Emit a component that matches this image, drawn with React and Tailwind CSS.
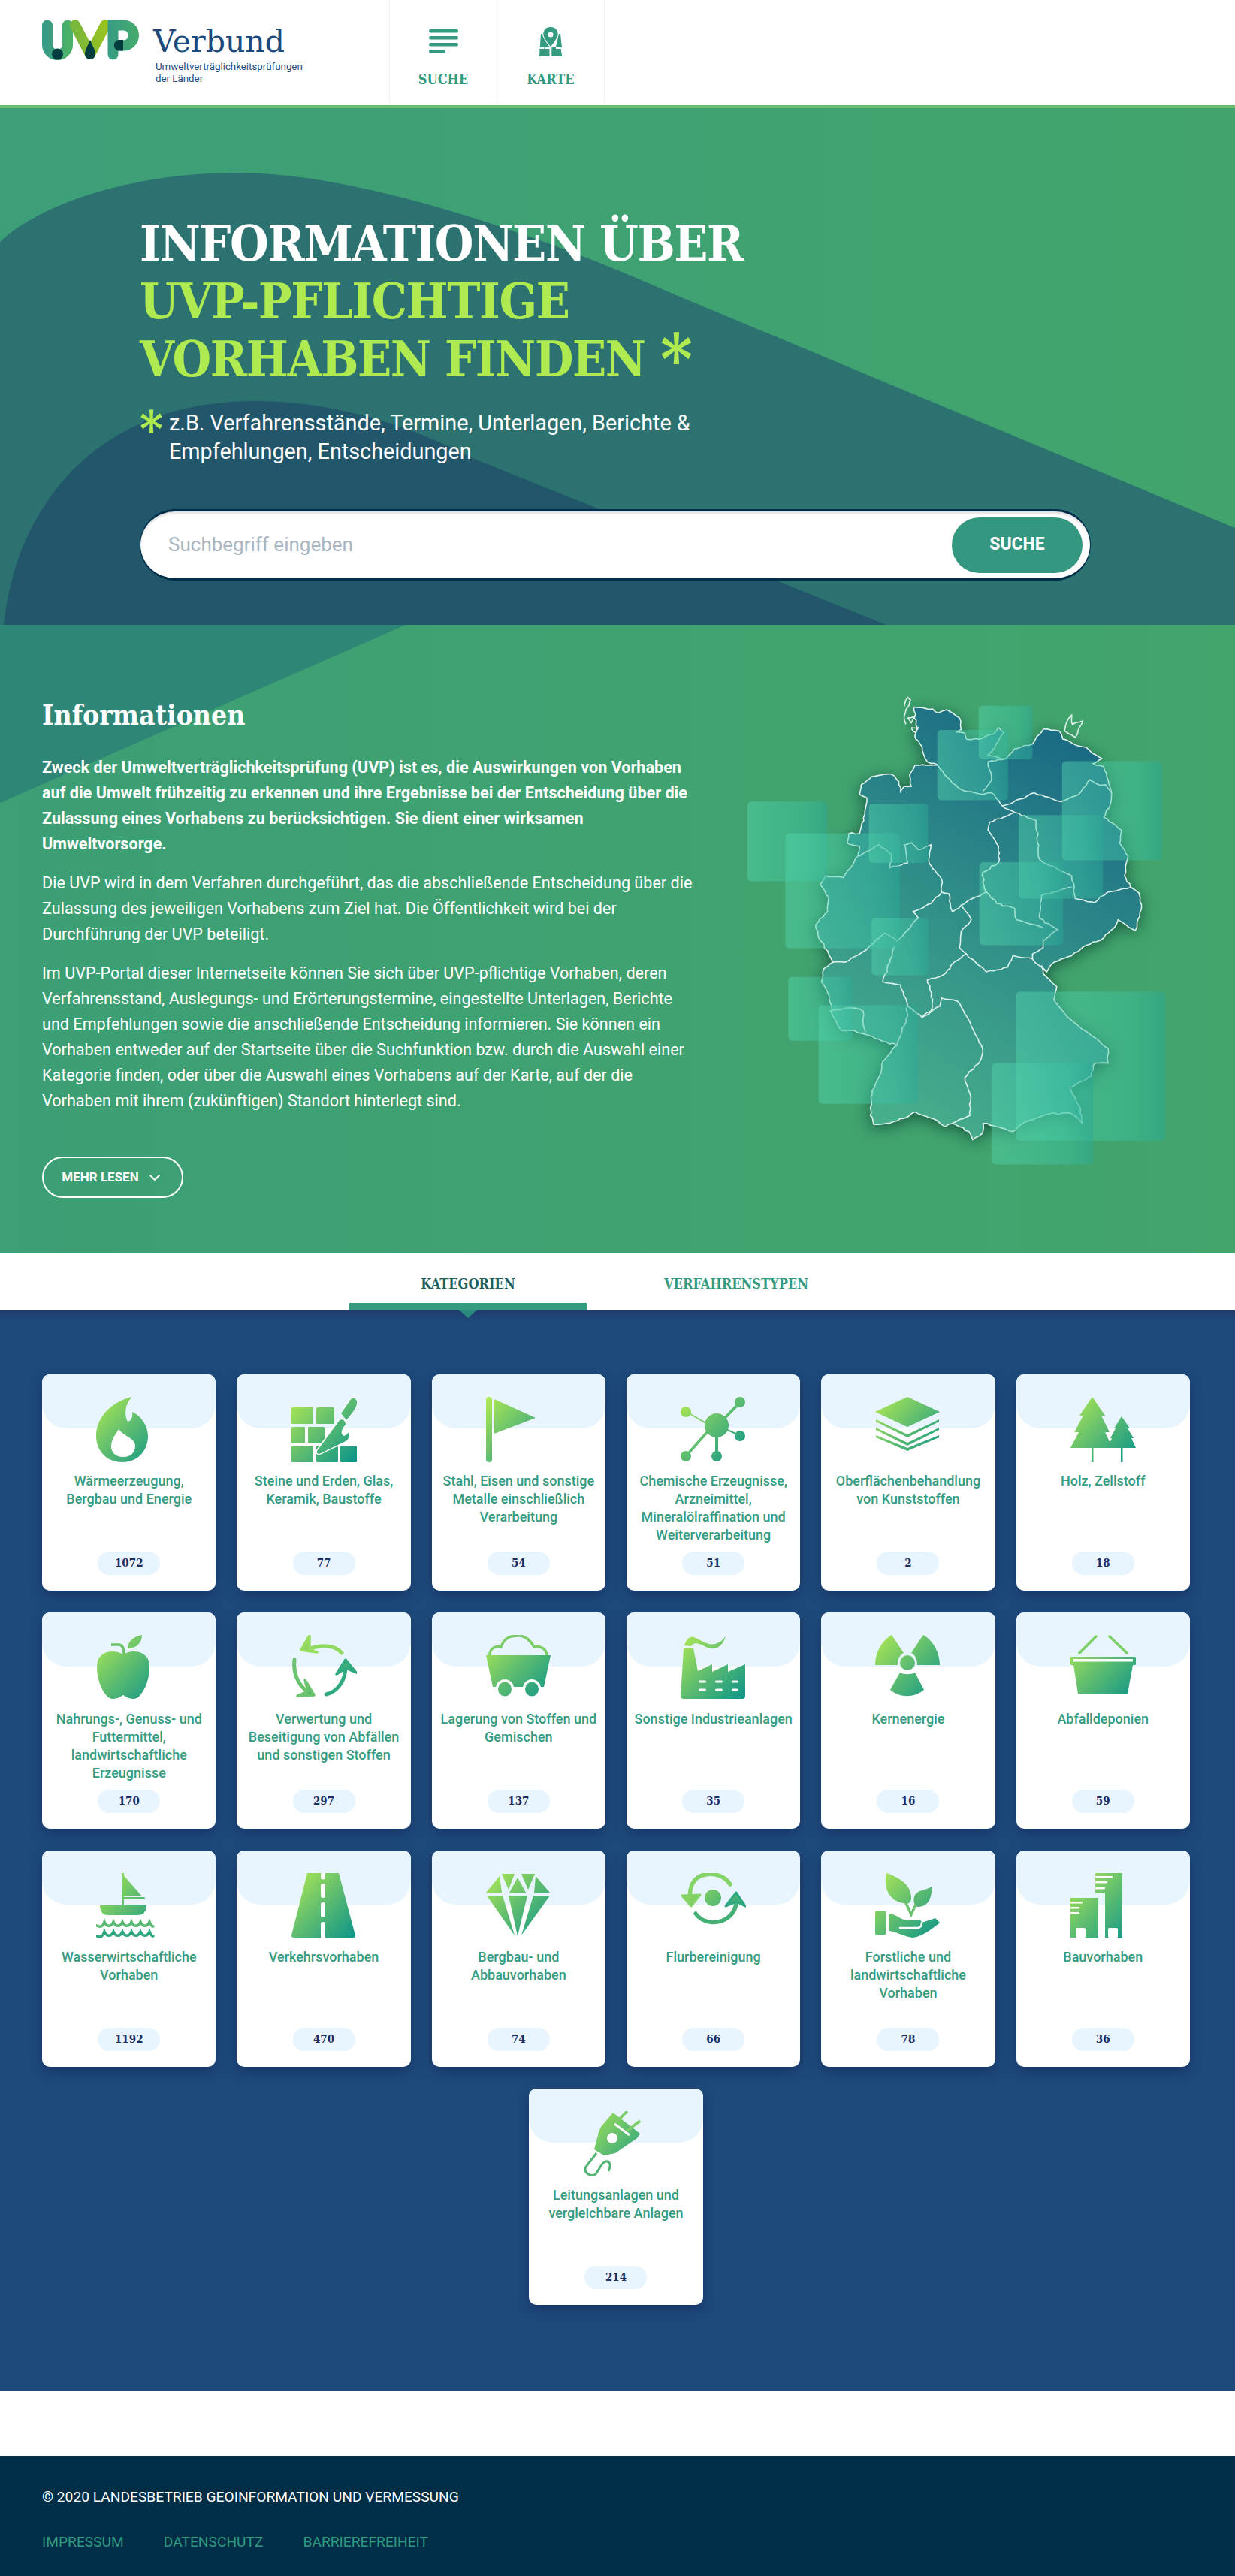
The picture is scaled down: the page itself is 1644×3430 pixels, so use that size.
import { useId } from 'react';
import { ChevronDown } from 'lucide-react';

// coastline and borders are traced in a 1568x1568 space, then roughened a bit
function rough(points, seed = 1, amount = 5) {
  let s = seed;
  const rnd = () => {
    s = (s * 9301 + 49297) % 233280;
    return s / 233280 - 0.5;
  };
  let d = `M${points[0][0]} ${points[0][1]}`;
  for (let i = 1; i < points.length; i++) {
    const [ax, ay] = points[i - 1];
    const [bx, by] = points[i];
    const steps = Math.max(1, Math.round(Math.hypot(bx - ax, by - ay) / 11));
    for (let k = 1; k <= steps; k++) {
      const t = k / steps;
      const j = k === steps ? 0 : amount;
      d += `L${(ax + (bx - ax) * t + rnd() * j).toFixed(1)} ${(ay + (by - ay) * t + rnd() * j).toFixed(1)}`;
    }
  }
  return d;
}

const OUTLINE = [[668,142],[720,148],[735,160],[760,150],[795,175],[800,210],[785,218],[810,222],[815,240],[850,240],[890,225],[905,205],[918,220],[905,245],[875,290],[925,300],[950,270],[1000,255],[1020,225],[1030,210],[1075,215],[1085,240],[1115,255],[1150,265],[1170,285],[1195,300],[1170,315],[1200,325],[1222,405],[1218,440],[1200,480],[1250,520],[1245,560],[1268,600],[1258,660],[1275,695],[1298,712],[1306,760],[1288,828],[1262,810],[1240,795],[1235,810],[1200,850],[1140,880],[1110,905],[1060,925],[1040,955],[1025,935],[1030,960],[1068,1000],[1060,1040],[1100,1095],[1165,1150],[1212,1190],[1212,1235],[1175,1235],[1165,1275],[1105,1310],[1135,1375],[1140,1420],[1110,1390],[1050,1390],[980,1415],[945,1445],[880,1425],[862,1420],[860,1450],[832,1470],[822,1445],[775,1420],[755,1430],[720,1405],[670,1385],[640,1405],[590,1420],[555,1423],[545,1395],[550,1320],[575,1265],[580,1230],[620,1180],[560,1160],[525,1145],[500,1135],[465,1135],[440,1090],[430,1030],[408,985],[415,945],[440,925],[425,890],[400,850],[392,810],[425,770],[428,725],[405,685],[420,660],[470,665],[490,635],[510,600],[515,570],[480,560],[485,530],[515,530],[530,470],[535,420],[515,410],[520,380],[550,355],[605,348],[625,370],[630,400],[640,385],[660,385],[655,350],[670,320],[735,320],[705,310],[685,255],[670,230],[675,215],[668,142]];

const BORDERS = [
  [[735,322],[775,375],[800,395],[860,410],[885,405],[915,445],[950,465]],
  [[925,300],[875,310],[885,365],[860,400]],
  [[915,445],[945,435],[1005,405],[1080,432],[1130,410],[1160,365],[1190,382],[1205,380],[1222,405]],
  [[950,465],[880,495],[875,520],[905,570],[905,620],[860,650],[865,700],[870,708]],
  [[950,465],[1010,490],[1020,610],[1110,660],[1120,730],[1175,742],[1210,710],[1275,695]],
  [[1110,695],[1025,720],[1020,790],[1070,825],[1030,860],[1030,880],[1000,900],[1000,915]],
  [[870,708],[900,745],[950,760],[955,795],[1030,820]],
  [[800,752],[828,795],[800,830],[795,880],[815,900]],
  [[870,708],[800,750],[775,770],[765,715],[745,710],[715,745],[665,770],[680,790]],
  [[515,600],[570,565],[605,595],[600,635],[650,620],[640,565],[660,558],[680,580],[715,565],[710,620],[745,670],[745,710]],
  [[680,790],[620,860],[585,835],[540,880],[475,925],[440,925]],
  [[615,875],[600,925],[580,985],[630,995],[650,1060],[690,1095],[715,1075],[720,1040],[705,980],[755,960],[780,925],[815,900]],
  [[815,900],[870,955],[930,940],[945,905],[1000,915],[1040,955]],
  [[690,1095],[740,1060],[745,1035],[790,1045],[825,1110],[860,1190],[855,1225],[810,1280],[825,1330],[825,1395],[775,1420]],
  [[620,1180],[650,1090],[645,1065]],
  [[430,1075],[495,1065],[525,1075],[525,1110],[530,1145]],
  [[640,140],[650,112],[658,120],[640,170],[645,195]],
  [[1095,190],[1110,167],[1112,195],[1140,185],[1120,235],[1090,215],[1095,190]],
  [[650,175],[670,170],[660,190],[650,175]],
  [[660,205],[680,205],[672,220],[660,205]],
];

const SQUARES = [
  [200,432,223,245],[307,530,321,352],[541,438,166,182],[733,212,198,216],[849,138,151,164],
  [1083,308,280,304],[961,473,236,257],[851,618,235,255],[549,790,160,175],[315,970,180,196],
  [400,1057,279,303],[953,1016,419,457],[885,1236,285,310],
];

function GermanyMap() {
  return (
    <svg viewBox="190 0 1378 1568" preserveAspectRatio="none" className="w-[654px] h-[680px] mt-[48px] shrink-0">
      <defs>
        <linearGradient id="landFill" gradientUnits="userSpaceOnUse" x1="1200" y1="300" x2="500" y2="1400">
          <stop offset="0" stopColor="#1b6a84" />
          <stop offset="0.42" stopColor="#2e8b88" />
          <stop offset="1" stopColor="#49b18c" />
        </linearGradient>
        <linearGradient id="squareFill" x1="0" y1="0" x2="1" y2="0">
          <stop offset="0" stopColor="#55d8ae" stopOpacity="0.45" />
          <stop offset="0.75" stopColor="#3cc3a5" stopOpacity="0.42" />
          <stop offset="1" stopColor="#2aa896" stopOpacity="0.5" />
        </linearGradient>
      </defs>
      <g className="drop-shadow-[0_10px_22px_rgba(0,50,40,0.6)]">
        <path d={rough(OUTLINE, 7) + 'Z'} fill="url(#landFill)" stroke="#dff3ee" strokeWidth="1.6" vectorEffect="non-scaling-stroke" />
      </g>
      {BORDERS.map((b, i) => (
        <path key={i} d={rough(b, i + 11)} fill="none" stroke="#dff3ee" strokeWidth="1.6" vectorEffect="non-scaling-stroke" />
      ))}
      {SQUARES.map(([x, y, w, h], i) => (
        <rect key={i} x={x} y={y} width={w} height={h} rx="12" ry="11" fill="url(#squareFill)" />
      ))}
    </svg>
  );
}

// every icon sits in an 87px box, shapes share one diagonal gradient
function Icon({ children }) {
  const id = useId();
  return (
    <svg viewBox="0 0 87 87" className="w-[87px] h-[87px] relative" fill={`url(#${id})`} stroke="none">
      <defs>
        <linearGradient id={id} gradientUnits="userSpaceOnUse" x1="0" y1="4" x2="84" y2="84">
          <stop offset="0" stopColor="#aee853" />
          <stop offset="0.5" stopColor="#5dbc70" />
          <stop offset="1" stopColor="#0e9688" />
        </linearGradient>
      </defs>
      {children}
    </svg>
  );
}

const Flame = () => (
  <Icon>
    <path fillRule="evenodd" d="M48 0C20 6 0 28 0 52C0 72 14 87 35 87C55 87 69 72 69 52C69 40 61 26 48 20C49 26 47 32 42 33C38 26 37 10 48 0ZM30 43C26 50 20 56 20 66C20 74 26 80 36 80C46 80 52 74 52 65C52 55 36 52 30 43Z" />
  </Icon>
);
const Bricks = () => (
  <Icon>
    <rect x="0" y="14" width="29" height="22" rx="1.5" />
    <rect x="33" y="14" width="24" height="22" rx="1.5" />
    <rect x="0" y="40" width="18" height="22" rx="1.5" />
    <rect x="22" y="40" width="22" height="22" rx="1.5" />
    <rect x="0" y="65" width="29" height="22" rx="1.5" />
    <rect x="33" y="65" width="29" height="22" rx="1.5" />
    <rect x="65" y="65" width="22" height="22" rx="1.5" />
    <path d="M64 31C68 29 72 32 72 37C67 42 64 50 70 52C73 51 75 49 76 47C77 53 76 57 72 59L37 76C35 76 33 75 34 72Z" stroke="#fff" strokeWidth="3" strokeLinejoin="round" paintOrder="stroke" />
    <path d="M66 22L79 3C83 0 88 3 87 9C86 16 79 24 73 31Z" stroke="#fff" strokeWidth="2" paintOrder="stroke" />
  </Icon>
);
const FlagIcon = () => (
  <Icon>
    <rect x="0" y="0" width="8" height="87" rx="4" />
    <path d="M11 3L66 28L11 49Z" strokeLinejoin="round" />
  </Icon>
);
const Molecule = () => (
  <Icon>
    <circle cx="48" cy="38" r="16" />
    <circle cx="7" cy="20" r="7" />
    <circle cx="79" cy="7" r="7" />
    <circle cx="79" cy="52" r="7" />
    <circle cx="7" cy="79" r="7" />
    <circle cx="48" cy="79" r="7" />
    <path d="M7 18.5L40 37.5L42 41L9 21.5Z" />
    <path d="M77.5 6L81 8L50 40L47 38Z" />
    <path d="M78 50L80 53L48 39L50 37Z" />
    <path d="M5.5 78L8.5 80L42 42L39 40Z" />
    <rect x="46" y="40" width="4" height="38" />
  </Icon>
);
const Layers = () => (
  <Icon>
    <path d="M0 20L43 0L86 20L43 40Z" strokeLinejoin="round" />
    <path d="M1 30L43 50L85 30L85 33L43 54L1 33Z" />
    <path d="M1 41L43 61L85 41L85 44L43 65L1 44Z" />
    <path d="M1 51L43 68L85 51L85 54L43 72L1 54Z" />
  </Icon>
);
const Trees = () => (
  <Icon>
    <path d="M29 0L46 25H41L52 47H46L56 68H0L11 47H5L17 25H12Z" />
    <rect x="28" y="68" width="2.5" height="19" />
    <path d="M68 26L79 42H76L84 55H81L87 68H49L55 55H53L60 42H58Z" />
    <rect x="67" y="68" width="2.5" height="19" />
  </Icon>
);
const Apple = () => (
  <Icon>
    <path d="M36 26C26 20 10 20 3 32C-2 44 3 70 15 82C22 88 30 84 36 80C42 84 50 88 57 82C69 70 74 44 69 32C62 20 46 20 36 26Z" />
    <path d="M42 18C42 8 50 2 61 0C61 10 54 18 42 18Z" />
    <path d="M20 13H30C35 13 37 18 37 26" fill="none" stroke="#6cc267" strokeWidth="3.5" />
  </Icon>
);
const Recycle = () => (
  <Icon>
    <path d="M67 24C58 14 44 13 28 17" fill="none" stroke="#8fd862" strokeWidth="5" strokeLinecap="round" />
    <path d="M24 1L13 20L34 23L24 19Z" stroke="#98dc60" strokeWidth="3.5" strokeLinejoin="round" />
    <path d="M46 79C60 76 72 62 72 42" fill="none" stroke="#2faa7f" strokeWidth="5" strokeLinecap="round" />
    <path d="M72 33L60 52L72 44L86 50Z" stroke="#2faa7f" strokeWidth="3.5" strokeLinejoin="round" />
    <path d="M4 33C2 50 8 66 22 76" fill="none" stroke="#6cc36e" strokeWidth="5" strokeLinecap="round" />
    <path d="M30 80L8 81L22 75L18 60Z" stroke="#6cc36e" strokeWidth="3.5" strokeLinejoin="round" />
  </Icon>
);
const Cart = () => (
  <Icon>
    <path d="M0 27H86L77 69H9Z" strokeLinejoin="round" />
    <path d="M5 27C5 18 12 14 20 16C24 4 32 1 43 1C52 1 60 8 64 16C72 14 80 18 81 27" fill="none" stroke="#7dce68" strokeWidth="3.5" />
    <circle cx="25" cy="71" r="12" fill="#fff" />
    <circle cx="61" cy="71" r="12" fill="#fff" />
    <ellipse cx="25" cy="72" rx="9" ry="9.5" />
    <ellipse cx="61" cy="72" rx="9" ry="9.5" />
  </Icon>
);
const Factory = () => (
  <Icon>
    <path d="M4 18H17L23 48L42 39V49L63 39V49L86 39V81Q86 85 82 85H4Q0 85 0 81Z" />
    <path d="M5 14C8 4 14 0 20 4C30 9 38 14 46 12C52 10 58 6 60 1C58 12 48 22 36 17C26 12 18 8 14 15Z" />
    <g fill="#fff">
      <rect x="24" y="60.5" width="10" height="3" rx="1.5" />
      <rect x="46" y="60.5" width="10" height="3" rx="1.5" />
      <rect x="68" y="60.5" width="9" height="3" rx="1.5" />
      <rect x="24" y="71.5" width="10" height="3" rx="1.5" />
      <rect x="46" y="71.5" width="10" height="3" rx="1.5" />
      <rect x="68" y="71.5" width="9" height="3" rx="1.5" />
    </g>
  </Icon>
);
const Radiation = () => (
  <Icon>
    <circle cx="43" cy="37" r="10" />
    <path d="M22 0L38 24C32 27 30 33 30 40H0C0 24 8 8 22 0Z" />
    <path d="M64 0L48 24C54 27 56 33 56 40H86C86 24 78 8 64 0Z" />
    <path d="M33 50C38 53 48 53 53 50L65 73C52 84 33 84 20 73Z" />
  </Icon>
);
const Basket = () => (
  <Icon>
    <path d="M34 2L12 24M52 2L75 24" fill="none" stroke="#7dcf69" strokeWidth="3.5" strokeLinecap="round" />
    <rect x="0" y="29" width="87" height="11" rx="1.5" />
    <rect x="4" y="32" width="79" height="3.5" fill="#fff" />
    <path d="M4 40H83L76 78H10Z" strokeLinejoin="round" />
  </Icon>
);
const Boat = () => (
  <Icon>
    <path d="M34 0L61 31H36Z" strokeLinejoin="round" />
    <rect x="34" y="0" width="3" height="44" />
    <rect x="36" y="32" width="29" height="3" rx="1.5" />
    <path d="M5 43H67Q67 56 55 56H16Q5 56 5 43Z" />
    <path d="M1 70C5 72 9 72 11 65C14 72 20 72 23 65C26 72 32 72 35 65C38 72 44 72 47 65C50 72 56 72 59 65C62 72 68 72 71 65C73 70 74 71 76 71" fill="none" stroke="#59b971" strokeWidth="3.5" strokeLinecap="round" />
    <path d="M1 84C5 86 9 85 11 78C14 85 20 85 23 78C26 85 32 85 35 78C38 85 44 85 47 78C50 85 56 85 59 78C62 85 68 85 71 78C73 83 74 84 76 84" fill="none" stroke="#2ea97e" strokeWidth="3.5" strokeLinecap="round" />
  </Icon>
);
const Road = () => (
  <Icon>
    <path d="M21 0H63L85 83Q85 86 82 86H3Q0 86 0 83Z" />
    <path d="M42 2.5V5.5M42 17V30M42 42V56M42 68V86" fill="none" stroke="#fff" strokeWidth="6" strokeLinecap="round" />
  </Icon>
);
const Gem = () => (
  <Icon>
    <g strokeLinejoin="round">
      <path d="M18 4L0 26H21Z" />
      <path d="M42 6L31 26H53Z" />
      <path d="M21 1H38L30 22Z" />
      <path d="M47 1H65L56 22Z" />
      <path d="M66 4L85 26H64Z" />
      <path d="M1 30H22L38 83Z" />
      <path d="M30 30H55L42 84Z" />
      <path d="M63 30H85L47 83Z" />
    </g>
  </Icon>
);
const Flur = () => (
  <Icon>
    <ellipse cx="43" cy="33" rx="11" ry="11" />
    <path d="M66 15C58 2 40 -2 26 4C14 10 11 24 13 36" fill="none" stroke="#85d467" strokeWidth="5.5" strokeLinecap="round" />
    <path d="M14 44L2 30L26 29Z" stroke="#85d467" strokeWidth="3" strokeLinejoin="round" />
    <path d="M20 54C30 68 50 68 62 60C70 54 74 46 74 38" fill="none" stroke="#45b075" strokeWidth="5.5" strokeLinecap="round" />
    <path d="M74 26L86 44L74 38L60 44Z" stroke="#2da77f" strokeWidth="3" strokeLinejoin="round" />
  </Icon>
);
const Plant = () => (
  <Icon>
    <path d="M15 0C30 5 48 15 48 32C48 40 44 42 38 40C20 38 10 20 15 0Z" />
    <path d="M75 18C76 30 72 45 57 45C50 44 50 30 55 27C60 22 70 22 75 18Z" />
    <path d="M40 38L48 55L54 42" fill="none" stroke="#6cc36c" strokeWidth="3.5" />
    <rect x="0" y="50" width="14" height="32" rx="1.5" />
    <path d="M18 54C26 54 32 60 38 62H56C60 62 62 64 62 66L80 60L86 66C74 76 60 86 49 86C38 84 28 78 18 77Z" />
    <path d="M33 73H56C60 73 62 71 62 66" fill="none" stroke="#fff" strokeWidth="2.5" strokeLinecap="round" />
  </Icon>
);
const Buildings = () => (
  <Icon>
    <rect x="0" y="33" width="37" height="53" />
    <path d="M33 0H69V86H46V26H33Z" />
    <g fill="#fff">
      <rect x="0" y="38" width="16" height="2.5" rx="1" />
      <rect x="0" y="45" width="12" height="2.5" rx="1" />
      <rect x="0" y="52" width="12" height="2.5" rx="1" />
      <rect x="33" y="4" width="23" height="2.5" rx="1" />
      <rect x="33" y="11" width="16" height="2.5" rx="1" />
      <rect x="33" y="19" width="13" height="2.5" rx="1" />
      <rect x="7" y="73" width="13" height="13" rx="1.5" />
      <rect x="50" y="73" width="13" height="13" rx="1.5" />
    </g>
  </Icon>
);
const Plug = () => (
  <Icon>
    <path d="M24 21L40 2L76 30L72 36L43 56L28 59L15 51L21 28Z" />
    <path d="M46 13L59 0M59 26L76 13" fill="none" stroke="#7ccd68" strokeWidth="3.5" />
    <circle cx="39" cy="36" r="7" fill="#fff" />
    <path d="M42 17L62 32" fill="none" stroke="#fff" strokeWidth="3" />
    <path d="M18 56L4 74C0 82 10 88 17 84C24 74 24 70 30 67C36 66 38 72 34 80" fill="none" stroke="#53b476" strokeWidth="3" />
  </Icon>
);

const CATEGORIES = [
  { icon: Flame, title: 'Wärmeerzeugung, Bergbau und Energie', count: 1072 },
  { icon: Bricks, title: 'Steine und Erden, Glas, Keramik, Baustoffe', count: 77 },
  { icon: FlagIcon, title: 'Stahl, Eisen und sonstige Metalle einschließlich Verarbeitung', count: 54 },
  { icon: Molecule, title: 'Chemische Erzeugnisse, Arzneimittel, Mineralölraffination und Weiterverarbeitung', count: 51 },
  { icon: Layers, title: 'Oberflächenbehandlung von Kunststoffen', count: 2 },
  { icon: Trees, title: 'Holz, Zellstoff', count: 18 },
  { icon: Apple, title: 'Nahrungs-, Genuss- und Futtermittel, landwirtschaftliche Erzeugnisse', count: 170 },
  { icon: Recycle, title: 'Verwertung und Beseitigung von Abfällen und sonstigen Stoffen', count: 297 },
  { icon: Cart, title: 'Lagerung von Stoffen und Gemischen', count: 137 },
  { icon: Factory, title: 'Sonstige Industrieanlagen', count: 35 },
  { icon: Radiation, title: 'Kernenergie', count: 16 },
  { icon: Basket, title: 'Abfalldeponien', count: 59 },
  { icon: Boat, title: 'Wasserwirtschaftliche Vorhaben', count: 1192 },
  { icon: Road, title: 'Verkehrsvorhaben', count: 470 },
  { icon: Gem, title: 'Bergbau- und Abbauvorhaben', count: 74 },
  { icon: Flur, title: 'Flurbereinigung', count: 66 },
  { icon: Plant, title: 'Forstliche und landwirtschaftliche Vorhaben', count: 78 },
  { icon: Buildings, title: 'Bauvorhaben', count: 36 },
  { icon: Plug, title: 'Leitungsanlagen und vergleichbare Anlagen', count: 214 },
];

function CategoryCard({ icon: CardIcon, title, count }) {
  return (
    <div className="relative w-[231.3px] h-[288px] bg-white rounded-[10px] flex flex-col items-center shadow-[0_7px_16px_rgba(22,38,90,0.55)]">
      <div className="absolute top-0 inset-x-0 h-[72px] bg-[#e8f5ff] rounded-t-[10px] rounded-b-[32px]" />
      <div className="mt-[30px]">
        <CardIcon />
      </div>
      <p className="relative mt-[13px] px-[8px] text-center text-[18px] leading-[24px] font-medium text-[#359b81]">{title}</p>
      <div className="mt-auto mb-[21px] w-[83px] h-[31px] rounded-full bg-[#e8f5ff] flex items-center justify-center font-['DejaVu_Serif_Condensed','DejaVu_Serif',serif] font-bold text-[15px] text-[#1d2d5f]">
        {count}
      </div>
    </div>
  );
}

function Logo() {
  return (
    <svg viewBox="0 0 129 54" className="w-[129px] h-[54px]" fill="none">
      <defs>
        <linearGradient id="logoU" x1="0" y1="0" x2="1" y2="0">
          <stop offset="0" stopColor="#379c84" />
          <stop offset="1" stopColor="#4bb068" />
        </linearGradient>
        <linearGradient id="logoV" x1="0" y1="0" x2="1" y2="0">
          <stop offset="0" stopColor="#78b63c" />
          <stop offset="1" stopColor="#97c321" />
        </linearGradient>
        <linearGradient id="logoP" gradientUnits="userSpaceOnUse" x1="88" y1="0" x2="129" y2="0">
          <stop offset="0" stopColor="#379c84" />
          <stop offset="1" stopColor="#46ab6c" />
        </linearGradient>
      </defs>
      <path d="M7 7.5V33.5A13.5 13.5 0 0 0 34 33.5V7.5" stroke="url(#logoU)" strokeWidth="14" strokeLinecap="round" />
      <circle cx="20.5" cy="46" r="7.5" fill="#003d3f" />
      <path d="M44 7.5L64 46L84 7.5" stroke="url(#logoV)" strokeWidth="14" strokeLinecap="round" strokeLinejoin="round" />
      <path d="M64 27C67 35 71 40 71 46A7 7 0 0 1 57 46C57 40 61 35 64 27Z" fill="#003d3f" />
      <path d="M94.5 46.5V7.5H108.5A13.5 13.5 0 0 1 108.5 34.5H102" stroke="url(#logoP)" strokeWidth="14" strokeLinecap="round" />
      <path d="M101.5 27A7.5 7.5 0 0 0 101.5 41.5H108V27Z" fill="#003d3f" />
    </svg>
  );
}

function MapPinIcon() {
  return (
    <svg viewBox="0 0 34 39" className="w-[34px] h-[39px]" fill="#349a80">
      <path fillRule="evenodd" d="M17 0C10.5 0 6.5 5 7.5 10.5C8 14 12 20 17 26C22 20 26 14 26.5 10.5C27.5 5 23.5 0 17 0ZM17 6.5A3.5 3.5 0 1 1 17 13.5A3.5 3.5 0 0 1 17 6.5Z" />
      <path d="M4 9H6C6.5 14 11 20 15.5 26V27H10V29H15.5V39H2V38ZM0.5 39L2 29H8.5V27H3Z M18.5 27V39H32L30.5 29H24V27ZM24 26L28 9H30L32 27H25.5Z" />
      <path d="M18.5 39V29H24V39Z M26 29H30.5L32 38.5H26Z" />
    </svg>
  );
}

function NavItem({ label, children }) {
  return (
    <div className="w-[143px] h-[140px] border-l border-[#f1f3f4] flex flex-col items-center">
      <div className="h-[36px] mt-[36px] flex items-start justify-center">{children}</div>
      <span className="mt-[26px] text-[18px] leading-[16px] font-bold text-[#349a80] font-['DejaVu_Serif_Condensed','DejaVu_Serif',serif]">{label}</span>
    </div>
  );
}

export default function App() {
  return (
    <div className="font-['Roboto',sans-serif] bg-white">
      <header className="h-[144px] border-b-4 border-[#6abf6e] flex pl-[56px]">
        <div className="w-[462px] flex items-start pt-[26px]">
          <Logo />
          <div className="ml-[19px]">
            <div className="font-['DejaVu_Serif',serif] text-[41px] leading-[48px] text-[#1c4a7c] mt-[5px]">Verbund</div>
            <div className="ml-[3px] mt-[2px] text-[13.3px] leading-[16px] text-[#1d4a7c]">
              Umweltverträglichkeitsprüfungen<br />der Länder
            </div>
          </div>
        </div>
        <NavItem label="SUCHE">
          <svg viewBox="0 0 39 32" className="w-[39px] h-[32px] mt-[3px]" fill="#349a80">
            <rect y="0" width="39" height="4.5" rx="2.2" />
            <rect y="9" width="39" height="4.5" rx="2.2" />
            <rect y="18" width="39" height="4.5" rx="2.2" />
            <rect y="27" width="22" height="4.5" rx="2.2" />
          </svg>
        </NavItem>
        <NavItem label="KARTE">
          <MapPinIcon />
        </NavItem>
        <div className="h-[140px] border-l border-[#f1f3f4]" />
      </header>

      <section className="relative h-[688px] overflow-hidden bg-gradient-to-r from-[#3c9f78] to-[#42a46c] pt-[142px] pl-[186px]">
        <svg viewBox="0 0 1644 688" className="absolute inset-0 w-full h-full">
          <path d="M0 178C50 130 170 86 316 86C470 86 700 160 900 249L1644 559V688H0Z" fill="#2c7270" />
          <path d="M5 688C20 540 120 390 340 390C440 390 540 420 629 466L1180 688Z" fill="#22566b" />
        </svg>
        <div className="relative">
          <h1 className="font-['DejaVu_Serif_Condensed','DejaVu_Serif',serif] font-bold text-[66px] leading-[77px] tracking-[-1.4px] text-white">
            INFORMATIONEN ÜBER
            <br />
            <span className="text-[#aeea50]">
              UVP-PFLICHTIGE
              <br />
              VORHABEN FINDEN
              <span className="relative top-[10px] text-[92px] leading-[0] ml-[20px]">*</span>
            </span>
          </h1>
          <div className="flex mt-[27px]">
            <span className="w-[39px] font-['DejaVu_Serif_Condensed','DejaVu_Serif',serif] font-bold text-[66px] leading-[54px] text-[#aeea50]">*</span>
            <p className="text-[28.8px] leading-[38px] text-white">
              z.B. Verfahrensstände, Termine, Unterlagen, Berichte &amp;
              <br />
              Empfehlungen, Entscheidungen
            </p>
          </div>
          <div className="mt-[58px] w-[1266px] h-[95px] rounded-full bg-white border-y-[3px] border-x border-[#002e4a] flex items-center justify-between pl-[37px] pr-[10px] shadow-[inset_0_3px_3px_rgba(0,0,0,0.12)]">
            <span className="text-[26px] text-[#a9b5c0]">Suchbegriff eingeben</span>
            <button className="w-[174px] h-[74px] rounded-full bg-[#34977f] text-white font-bold text-[23px]">SUCHE</button>
          </div>
        </div>
      </section>

      <section className="relative h-[836px] overflow-hidden bg-gradient-to-r from-[#3c9f75] to-[#43a56c] flex items-start pl-[56px]">
        <svg viewBox="0 0 1644 240" preserveAspectRatio="none" className="absolute top-0 left-0 w-full h-[240px]">
          <path d="M0 0H540L0 237Z" fill="#2f8676" />
        </svg>
        <div className="relative w-[878px] shrink-0 pt-[96px] text-white">
          <h2 className="font-['DejaVu_Serif_Condensed','DejaVu_Serif',serif] font-bold text-[37px] leading-[48px]">Informationen</h2>
          <p className="mt-[29px] text-[21.6px] leading-[34px] font-bold">
            Zweck der Umweltverträglichkeitsprüfung (UVP) ist es, die Auswirkungen von Vorhaben auf die Umwelt frühzeitig zu erkennen und ihre Ergebnisse bei der Entscheidung über die Zulassung eines Vorhabens zu berücksichtigen. Sie dient einer wirksamen Umweltvorsorge.
          </p>
          <p className="mt-[18px] text-[21.6px] leading-[34px]">
            Die UVP wird in dem Verfahren durchgeführt, das die abschließende Entscheidung über die Zulassung des jeweiligen Vorhabens zum Ziel hat. Die Öffentlichkeit wird bei der Durchführung der UVP beteiligt.
          </p>
          <p className="mt-[18px] text-[21.6px] leading-[34px]">
            Im UVP-Portal dieser Internetseite können Sie sich über UVP-pflichtige Vorhaben, deren Verfahrensstand, Auslegungs- und Erörterungstermine, eingestellte Unterlagen, Berichte und Empfehlungen sowie die anschließende Entscheidung informieren. Sie können ein Vorhaben entweder auf der Startseite über die Suchfunktion bzw. durch die Auswahl einer Kategorie finden, oder über die Auswahl eines Vorhabens auf der Karte, auf der die Vorhaben mit ihrem (zukünftigen) Standort hinterlegt sind.
          </p>
          <button className="mt-[57px] w-[188px] h-[55px] rounded-full border-2 border-white flex items-center justify-center gap-[9px] text-[17px] font-bold">
            MEHR LESEN
            <ChevronDown size={24} strokeWidth={2} />
          </button>
        </div>
        <div className="relative ml-[56px]">
          <GermanyMap />
        </div>
      </section>

      <nav className="relative h-[76px] flex justify-center bg-white">
        <div className="relative w-[316px] flex justify-center pt-[28px] border-b-[9px] border-[#349a80] font-['DejaVu_Serif_Condensed','DejaVu_Serif',serif] font-bold text-[18px] text-[#1f5f5c]">
          KATEGORIEN
          <div className="absolute left-1/2 -translate-x-1/2 top-[76px] w-0 h-0 border-x-[12px] border-x-transparent border-t-[11px] border-t-[#2b8a80] z-10" />
        </div>
        <div className="w-[398px] flex justify-center pt-[28px] font-['DejaVu_Serif_Condensed','DejaVu_Serif',serif] font-bold text-[18px] text-[#349a80]">
          VERFAHRENSTYPEN
        </div>
      </nav>

      <section className="bg-[#1d4a7a] bg-[linear-gradient(#213a6b,#1d4a7a_14px)] h-[1440px] px-[56px] pt-[86px]">
        <div className="w-[1528px] flex flex-wrap justify-center gap-x-[28px] gap-y-[29px]">
          {CATEGORIES.map(c => (
            <CategoryCard key={c.title} {...c} />
          ))}
        </div>
      </section>

      <div className="h-[86px] bg-white" />

      <footer className="h-[160px] bg-[#012e47] pl-[56px] pt-[43px]">
        <p className="text-[19.2px] leading-[24px] text-white">© 2020 LANDESBETRIEB GEOINFORMATION UND VERMESSUNG</p>
        <div className="mt-[36px] flex gap-[53px] text-[19.2px] leading-[24px] text-[#2f9a80]">
          <span>IMPRESSUM</span>
          <span>DATENSCHUTZ</span>
          <span>BARRIEREFREIHEIT</span>
        </div>
      </footer>
    </div>
  );
}
